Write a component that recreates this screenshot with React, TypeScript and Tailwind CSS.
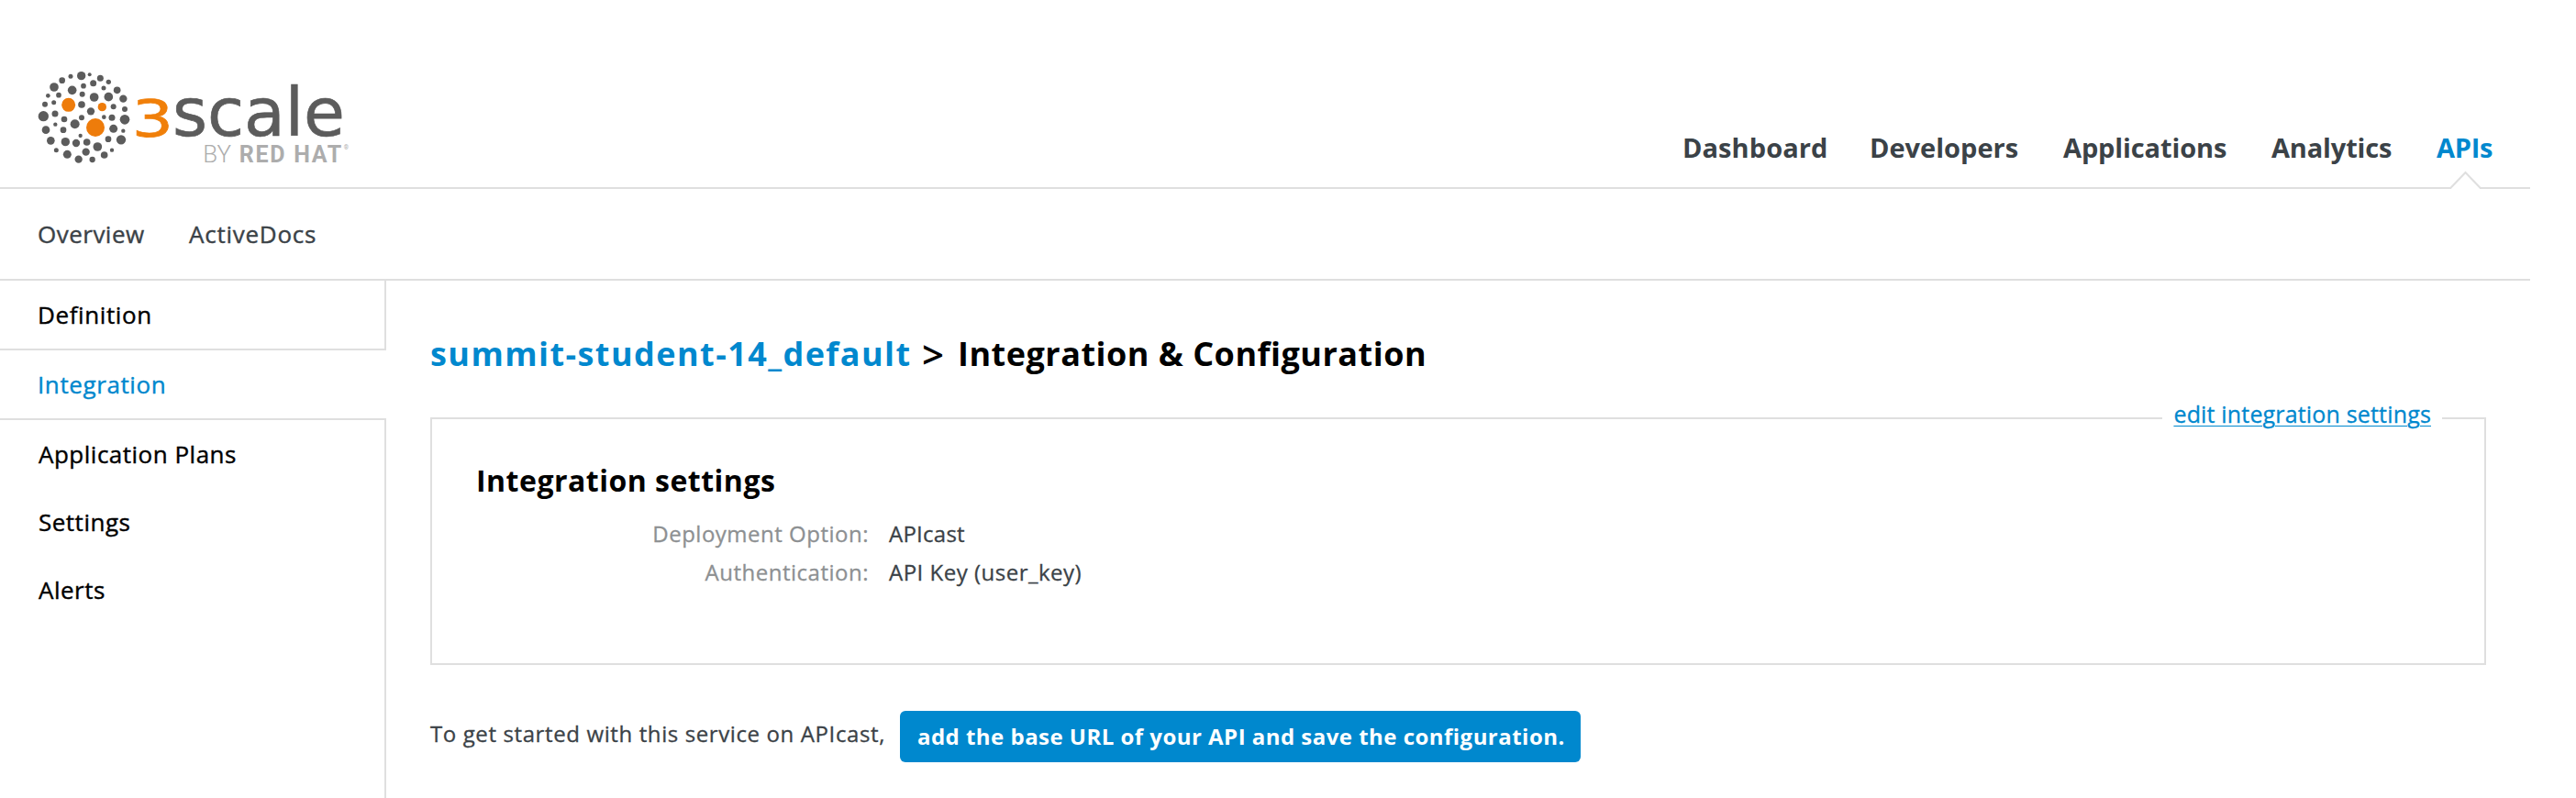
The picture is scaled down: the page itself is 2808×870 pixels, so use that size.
const grayDots: [number, number, number][] = [
  [176, 68, 14], [203, 64, 6], [141, 70, 7.5], [113, 83, 10], [238, 76, 10.5], [265, 88, 8], [87, 105, 14.5],
  [183, 101, 8.5], [215, 92, 10.5], [146, 115, 14.5], [249, 108, 7.5], [293, 115, 11.5], [67, 133, 7], [102, 131, 8.5],
  [179, 128, 9], [218, 138, 14.5], [265, 137, 14.5], [313, 143, 12.5], [57, 161, 9], [86, 155, 7.5], [177, 162, 11.5],
  [281, 169, 9], [318, 177, 9], [207, 184, 12.5], [52, 200, 17], [90, 192, 10.5], [120, 210, 10], [177, 205, 9],
  [250, 203, 7], [276, 205, 10.5], [318, 211, 16], [91, 227, 6.5], [155, 226, 15], [60, 245, 13], [117, 245, 10],
  [281, 241, 13.5], [313, 248, 6.5], [173, 264, 6.5], [76, 280, 13], [264, 275, 10], [306, 277, 15.5], [124, 284, 14],
  [159, 288, 12.5], [194, 285, 11.5], [229, 300, 14.5], [94, 311, 7.5], [276, 311, 6.5], [191, 317, 12.5],
  [130, 325, 13.5], [251, 327, 11.5], [167, 341, 12.5], [212, 342, 9.5],
];

const Logo = () => (
  <svg className="h-[130px] w-[380px] shrink-0" viewBox="0 0 1140 390">
    {grayDots.map(([x, y, r]) => <circle key={`${x}-${y}`} cx={x} cy={y} r={r} fill="#5c5c5c" />)}
    <circle cx="134" cy="163" r="22.5" fill="#ee7c0b" />
    <circle cx="244" cy="170" r="14" fill="#ee7c0b" />
    <circle cx="222" cy="237" r="30" fill="#ee7c0b" />
    <text transform="translate(341 264.5) scale(1.28 1)" fontFamily="'DejaVu Sans', sans-serif" fontSize="167" fill="#f07f09" stroke="#f07f09" strokeWidth="2">3</text>
    <text transform="translate(474 264)" fontFamily="'DejaVu Sans', sans-serif" fontSize="219" fill="#5c5c5c" stroke="#5c5c5c" strokeWidth="2" textLength="564">scale</text>
    <g fontFamily="Roboto, sans-serif" fill="#adadad">
      <text x="574" y="350" fontSize="75" fontWeight="300" textLength="92" lengthAdjust="spacingAndGlyphs">BY</text>
      <text x="692" y="350" fontSize="75" fontWeight="700" textLength="335" lengthAdjust="spacing">RED HAT</text>
      <text x="1034" y="308" fontSize="20">®</text>
    </g>
  </svg>
);

const nav = [
  ["Dashboard", "w-[204px] tracking-[0.07px]"],
  ["Developers", "w-[211px]"],
  ["Applications", "w-[227px] tracking-[-0.12px]"],
  ["Analytics", "w-[180px] tracking-[-0.16px]"],
];

export default function App() {
  return (
    <div className="flex h-[870px] w-full flex-col overflow-hidden bg-white font-['Open_Sans',sans-serif] text-[#3b4247]">
      <header className="flex h-[206px] w-[2758px] shrink-0 items-end justify-between border-b-2 border-[#dfdfdf] pl-[30px] pr-[26px]">
        <div className="pb-[14px]"><Logo /></div>
        <nav className="flex text-[29px] leading-[40px] font-bold">
          {nav.map(([label, cls]) => <a key={label} className={`${cls} pb-[23px]`}>{label}</a>)}
          <a className="relative w-[76px] pb-[23px] tracking-[-0.27px] text-[#0088ce]">
            APIs
            <svg className="absolute -bottom-[2px] left-[14px] h-[20px] w-[36px]" viewBox="0 0 36 20">
              <path d="M0.5 20 L17.5 2 L34.5 20Z" fill="#fff" />
              <path d="M0 19 H1.3 L17.5 2 L33.7 19 H36" fill="none" stroke="#dfdfdf" strokeWidth="2" />
            </svg>
          </a>
        </nav>
      </header>
      <nav className="flex h-[100px] w-[2758px] shrink-0 items-center border-b-2 border-[#dfdfdf] pl-[41px] text-[26px] leading-[36px] [-webkit-text-stroke:0.4px]">
        <a className="w-[165px] tracking-[0.49px]">Overview</a>
        <a className="tracking-[0.75px]">ActiveDocs</a>
      </nav>
      <div className="flex min-h-0 w-[2758px] flex-1">
        <aside className="flex w-[421px] shrink-0 flex-col text-[26px] leading-[74px] tracking-[0.6px] text-black [-webkit-text-stroke:0.4px]">
          <a className="h-[76px] border-r-2 border-b-2 border-[#dfdfdf] pl-[41px]">Definition</a>
          <a className="h-[74px] pl-[41px] text-[#0088ce]">Integration</a>
          <div className="flex flex-1 flex-col border-t-2 border-r-2 border-[#dfdfdf] pl-[42px] tracking-[0.5px]">
            <a>Application Plans</a>
            <a>Settings</a>
            <a>Alerts</a>
          </div>
        </aside>
        <main className="flex-1 pl-[48px]">
          <h1 className="flex h-[149px] pt-[55px] text-[36px] leading-[50px] font-bold text-black">
            <a className="w-[536px] tracking-[1.44px] text-[#0088ce]">summit-student-14_default</a>
            <span className="w-[39px] text-[42px] font-semibold">&gt;</span>
            <span className="tracking-[0.5px]">Integration &amp; Configuration</span>
          </h1>
          <section className="relative h-[270px] w-[2241px] border-2 border-[#dfdfdf] pt-[45px] pl-[48px] [-webkit-text-stroke:0.3px]">
            <a className="absolute -top-[22px] right-[46px] bg-white px-[12px] text-[25px] leading-[32px] tracking-[0.17px] text-[#0088ce] underline decoration-1 underline-offset-[3px]">edit integration settings</a>
            <h2 className="text-[32px] leading-[44px] font-bold tracking-[0.49px] text-black [-webkit-text-stroke:0px]">Integration settings</h2>
            <dl className="mt-[15px] grid grid-cols-[428px_1fr] gap-x-[22px] text-[24px] leading-[42px] tracking-[0.5px]">
              <dt className="text-right text-[#8d9092]">Deployment Option:</dt>
              <dd className="tracking-[0.25px]">APIcast</dd>
              <dt className="text-right text-[#8d9092]">Authentication:</dt>
              <dd>API Key (user_key)</dd>
            </dl>
          </section>
          <div className="mt-[50px] flex h-[56px] text-[24px] leading-[50px]">
            <span className="w-[512px] tracking-[0.61px] [-webkit-text-stroke:0.3px]">To get started with this service on APIcast,</span>
            <a className="w-[742px] rounded-[6px] bg-[#0088ce] pl-[19px] leading-[56px] font-bold tracking-[0.47px] text-white">add the base URL of your API and save the configuration.</a>
          </div>
        </main>
      </div>
    </div>
  );
}
